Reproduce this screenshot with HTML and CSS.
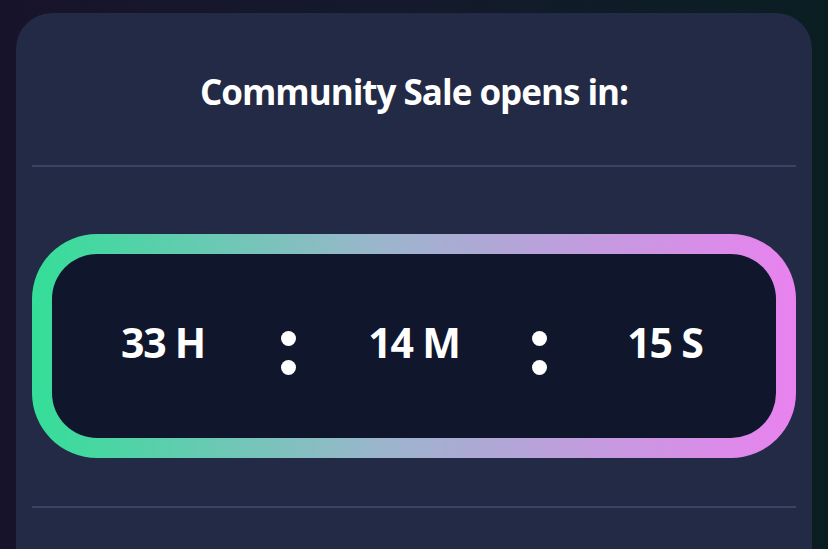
FILE: index.html
```html
<!DOCTYPE html>
<html lang="en">
  <head>
    <meta charset="UTF-8" />
    <meta name="viewport" content="width=device-width, initial-scale=1.0" />
    <title>Community Sale</title>
    <link rel="stylesheet" href="styles.css">
  </head>
  <body>
    <div class="sale-card">
      <h2 class="sale-title">Community Sale opens in:</h2>
      <hr class="divider">

      <div class="timer-frame">
        <div class="timer">
          <span class="unit" id="hours">33 H</span>
          <span class="sep"><i></i><i></i></span>
          <span class="unit" id="minutes">14 M</span>
          <span class="sep"><i></i><i></i></span>
          <span class="unit" id="seconds">15 S</span>
        </div>
      </div>

      <hr class="divider bottom">
    </div>
  </body>
</html>
```

FILE: styles.css
```css
body,html {
  margin: 0;
  height: 100%;
  overflow: hidden;
  font-family: "Open Sans", "Noto Sans", Arial, sans-serif;
  background: linear-gradient(90deg, #17132b 0%, #141a2c 50%, #0a1e22 100%);
}

.sale-card {
  box-sizing: border-box;
  margin: 13px 16px 0;
  height: calc(100% - 13px);
  padding: 0 16px;
  background: #222a46;
  border-radius: 36px 36px 0 0;
}

.sale-title {
  margin: 0;
  padding-top: 57px;
  height: 44px;
  line-height: 44px;
  text-align: center;
  color: #fff;
  font-size: 35px;
  font-weight: 700;
  letter-spacing: -1px;
}

.divider {
  margin: 51px 0 0;
  border: none;
  height: 2px;
  background: #394364;
}

.divider.bottom {
  margin-top: 48px;
}

.timer-frame {
  margin-top: 67px;
  padding: 20px;
  border-radius: 65px;
  background: linear-gradient(90deg, #34de98 0%, #9ab6cc 45%, #e982ef 100%);
}

.timer {
  height: 184px;
  padding: 0 11px;
  display: grid;
  grid-template-columns: 1fr 51px 1fr 51px 1fr;
  align-items: center;
  background: #10172d;
  border-radius: 45px;
}

.timer .unit {
  padding-bottom: 8px;
  text-align: center;
  color: #fff;
  font-size: 41px;
  font-weight: 700;
  letter-spacing: -1.2px;
}

.timer .sep {
  display: flex;
  flex-direction: column;
  align-items: center;
  gap: 14px;
  padding-top: 14px;
}

.timer .sep i {
  width: 15px;
  height: 15px;
  border-radius: 50%;
  background: #fff;
}
```
